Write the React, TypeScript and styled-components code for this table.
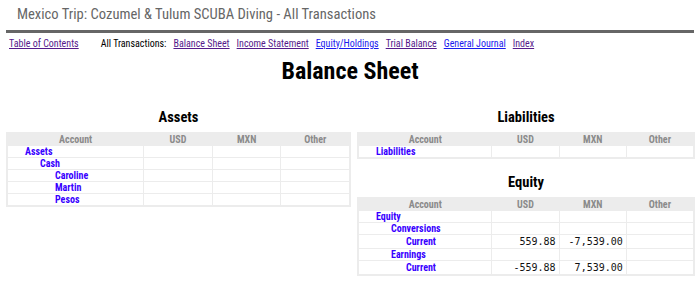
import React from "react";
import styled, { createGlobalStyle } from "styled-components";

const GlobalStyle = createGlobalStyle`
  html, body {
    margin: 0;
    padding: 0;
    background: #fff;
  }
  body {
    font-family: "Roboto Condensed", "Liberation Sans Narrow", Roboto, sans-serif;
  }
`;

const Page = styled.div`
  width: 698px;
  padding: 0 4px 0 6px;
  box-sizing: border-box;
`;

const Title = styled.h1`
  margin: 0;
  height: 30px;
  padding-left: 11px;
  font-size: 14.6px;
  line-height: 28px;
  font-weight: 400;
  color: #666;
  border-bottom: 3px solid #666;
`;

const Nav = styled.div`
  display: flex;
  align-items: center;
  height: 20px;
  padding-left: 3px;
  font-size: 10px;
  gap: 7px;
`;

const NavLabel = styled.span`
  color: #000;
  margin-left: 15px;
`;

const NavLink = styled.a<{ $visited?: boolean }>`
  color: ${(p) => (p.$visited ? "#551a8b" : "#1a1aee")};
  text-decoration: underline;
  cursor: pointer;
`;

const PageHeading = styled.h2`
  margin: 0;
  height: 40px;
  text-align: center;
  font-size: 24px;
  line-height: 36px;
  font-weight: 700;
  color: #000;
`;

const Columns = styled.div`
  display: grid;
  grid-template-columns: 345px 338px;
  column-gap: 6px;
  padding-top: 17px;
  align-items: start;
`;

const Column = styled.div`
  display: flex;
  flex-direction: column;
`;

const SectionHeading = styled.h3<{ $gap?: number }>`
  margin: ${(p) => p.$gap ?? 0}px 0 0 0;
  height: 22px;
  text-align: center;
  font-size: 14.5px;
  line-height: 16px;
  font-weight: 700;
  color: #000;
`;

const Table = styled.table`
  width: 100%;
  table-layout: fixed;
  border-collapse: separate;
  border-spacing: 1px;
  border: 1px solid #ececec;
  background: #ececec;
  font-size: 10px;
`;

const HeadCell = styled.th<{ $w: string }>`
  width: ${(p) => p.$w};
  height: 11px;
  padding: 0;
  line-height: 11px;
  font-weight: 700;
  color: #8a8a8a;
  text-align: center;
  background: #ececec;
`;

const NameCell = styled.td<{ $depth: number }>`
  height: 11px;
  padding: 0 0 0 ${(p) => 17 + p.$depth * 15}px;
  line-height: 11px;
  font-weight: 700;
  color: #3800ff;
  background: #fff;
  white-space: nowrap;
`;

const AmountCell = styled.td`
  padding: 0 3px 0 0;
  line-height: 13px;
  text-align: right;
  font-family: "DejaVu Sans Mono", "Liberation Mono", monospace;
  font-size: 10px;
  color: #111;
  background: #fff;
  white-space: nowrap;
`;

type Row = { name: string; depth: number; usd?: string; mxn?: string; other?: string };

function Ledger({ rows }: { rows: Row[] }) {
  return (
    <Table>
      <thead>
        <tr>
          <HeadCell $w="40%">Account</HeadCell>
          <HeadCell $w="20%">USD</HeadCell>
          <HeadCell $w="20%">MXN</HeadCell>
          <HeadCell $w="20%">Other</HeadCell>
        </tr>
      </thead>
      <tbody>
        {rows.map((r, i) => (
          <tr key={i}>
            <NameCell $depth={r.depth}>{r.name}</NameCell>
            <AmountCell>{r.usd}</AmountCell>
            <AmountCell>{r.mxn}</AmountCell>
            <AmountCell>{r.other}</AmountCell>
          </tr>
        ))}
      </tbody>
    </Table>
  );
}

const assets: Row[] = [
  { name: "Assets", depth: 0 },
  { name: "Cash", depth: 1 },
  { name: "Caroline", depth: 2 },
  { name: "Martin", depth: 2 },
  { name: "Pesos", depth: 2 },
];

const liabilities: Row[] = [{ name: "Liabilities", depth: 0 }];

const equity: Row[] = [
  { name: "Equity", depth: 0 },
  { name: "Conversions", depth: 1 },
  { name: "Current", depth: 2, usd: "559.88", mxn: "-7,539.00" },
  { name: "Earnings", depth: 1 },
  { name: "Current", depth: 2, usd: "-559.88", mxn: "7,539.00" },
];

export default function App() {
  return (
    <Page>
      <GlobalStyle />
      <Title>Mexico Trip: Cozumel &amp; Tulum SCUBA Diving - All Transactions</Title>
      <Nav>
        <NavLink $visited>Table of Contents</NavLink>
        <NavLabel>All Transactions:</NavLabel>
        <NavLink $visited>Balance Sheet</NavLink>
        <NavLink $visited>Income Statement</NavLink>
        <NavLink>Equity/Holdings</NavLink>
        <NavLink $visited>Trial Balance</NavLink>
        <NavLink>General Journal</NavLink>
        <NavLink $visited>Index</NavLink>
      </Nav>
      <PageHeading>Balance Sheet</PageHeading>
      <Columns>
        <Column>
          <SectionHeading>Assets</SectionHeading>
          <Ledger rows={assets} />
        </Column>
        <Column>
          <SectionHeading>Liabilities</SectionHeading>
          <Ledger rows={liabilities} />
          <SectionHeading $gap={16}>Equity</SectionHeading>
          <Ledger rows={equity} />
        </Column>
      </Columns>
    </Page>
  );
}
